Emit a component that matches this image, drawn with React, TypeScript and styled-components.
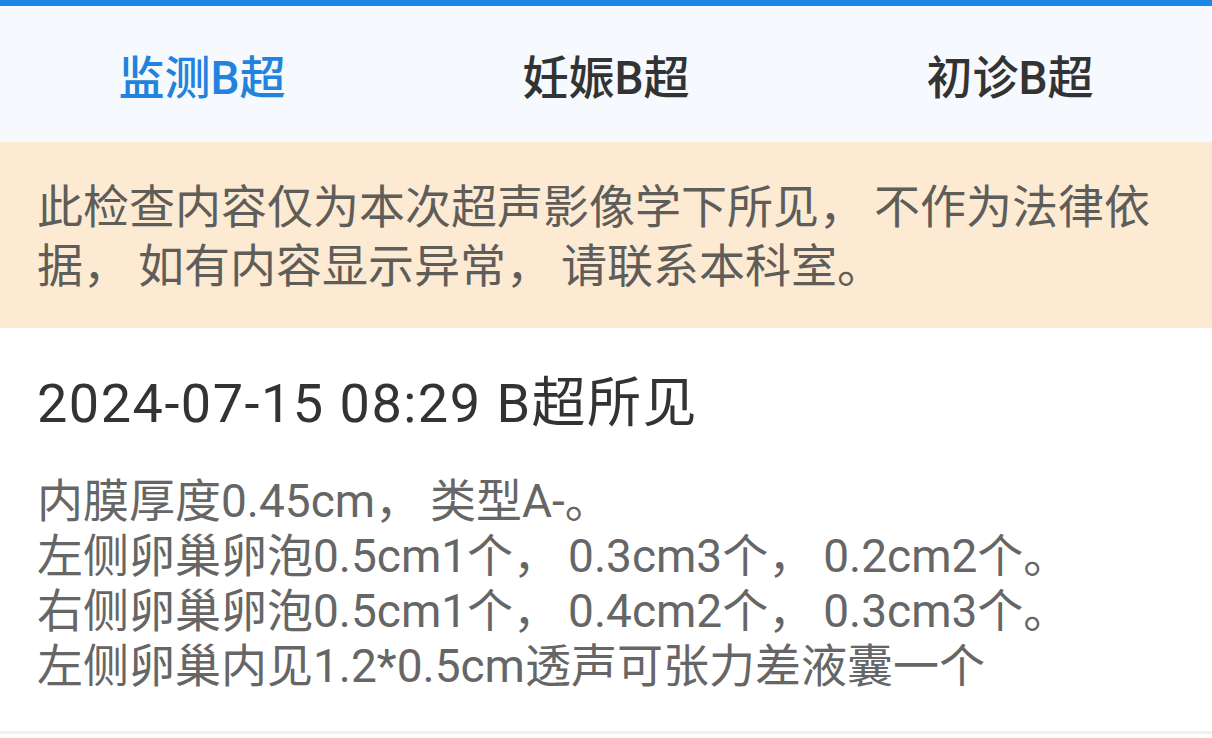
import { Fragment } from "react";
import styled, { createGlobalStyle } from "styled-components";

const GlobalStyle = createGlobalStyle`
  html, body {
    margin: 0;
    padding: 0;
    background: #ffffff;
  }
  body {
    font-family: Roboto, "Noto Sans CJK SC", sans-serif;
  }
`;

const tabs = [
  { key: "monitor", title: "监测B超" },
  { key: "pregnant", title: "妊娠B超" },
  { key: "first", title: "初诊B超" },
];

const notice =
  "此检查内容仅为本次超声影像学下所见，不作为法律依据，如有内容显示异常，请联系本科室。";

const findings = [
  "内膜厚度0.45cm，类型A-。",
  "左侧卵巢卵泡0.5cm1个，0.3cm3个，0.2cm2个。",
  "右侧卵巢卵泡0.5cm1个，0.4cm2个，0.3cm3个。",
  "左侧卵巢内见1.2*0.5cm透声可张力差液囊一个",
];

// the app font sets full-width commas a little wider than Noto does
const withCommas = (text: string) =>
  text.split("，").map((part, i, arr) => (
    <Fragment key={i}>
      {part}
      {i < arr.length - 1 && <Comma>，</Comma>}
    </Fragment>
  ));

export default function App() {
  const active = "monitor";
  return (
    <Page>
      <GlobalStyle />
      <TopStripe />
      <TabBar>
        {tabs.map((tab) => (
          <Tab key={tab.key} $active={tab.key === active}>
            {tab.title}
          </Tab>
        ))}
      </TabBar>
      <Notice>{withCommas(notice)}</Notice>
      <Report>
        <ReportTitle>2024-07-15 08:29 B超所见</ReportTitle>
        <ReportBody>
          {findings.map((line) => (
            <Line key={line}>{withCommas(line)}</Line>
          ))}
        </ReportBody>
      </Report>
      <Footer />
    </Page>
  );
}

const Page = styled.div`
  width: 100%;
  min-height: 738px;
  display: flex;
  flex-direction: column;
  background: #ffffff;
`;

const TopStripe = styled.div`
  height: 6px;
  background: #1a87e8;
`;

const TabBar = styled.div`
  display: grid;
  grid-template-columns: repeat(3, 1fr);
  height: 136px;
  background: #f6f9fd;
`;

const Tab = styled.div<{ $active?: boolean }>`
  display: flex;
  align-items: center;
  justify-content: center;
  font-size: 46px;
  font-weight: 500;
  color: ${(p) => (p.$active ? "#2383dc" : "#333333")};
`;

const Comma = styled.span`
  margin-right: 9px;
`;

const Notice = styled.div`
  background: #fcead2;
  padding: 36px 37px 32px;
  font-size: 46px;
  line-height: 59px;
  color: #5f5d5a;
`;

const Report = styled.div`
  display: flex;
  flex-direction: column;
  padding: 46px 37px 37px;
  gap: 40px;
`;

const ReportTitle = styled.div`
  font-size: 54px;
  line-height: 60px;
  letter-spacing: 1.5px;
  color: #333333;
`;

const ReportBody = styled.div`
  display: flex;
  flex-direction: column;
  font-size: 46px;
  line-height: 55px;
  color: #666666;
`;

const Line = styled.div`
  white-space: nowrap;
`;

const Footer = styled.div`
  flex: 1;
  border-top: 3px solid #f0f0f0;
  background: #ffffff;
`;
